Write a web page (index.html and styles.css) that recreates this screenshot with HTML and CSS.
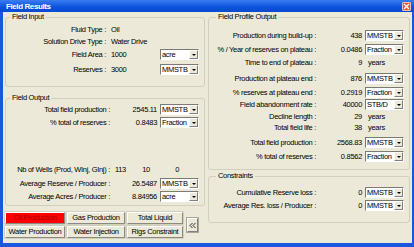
FILE: index.html
```html
<!DOCTYPE html>
<html lang="en">
<head>
    <meta charset="UTF-8">
    <meta name="viewport" content="width=device-width, initial-scale=1.0">
    <title>Field Results</title>
    <link rel="stylesheet" href="styles.css">
</head>
<body>
    <div class="window">
        <div class="titlebar">
            <span class="title">Field Results</span>
            <span class="close">
                <svg width="7" height="7" viewBox="0 0 7 7"><path d="M1 1L6 6M6 1L1 6" stroke="#fff" stroke-width="1.3"/></svg>
            </span>
        </div>

        <div class="client">
            <div class="column left-col">
                <fieldset class="group field-input">
                    <legend>Field Input</legend>
                    <div class="rows">
                        <div class="row"><span class="label">Fluid Type :</span><span class="value">Oil</span></div>
                        <div class="row"><span class="label">Solution Drive Type :</span><span class="value">Water Drive</span></div>
                        <div class="row">
                            <span class="label">Field Area :</span><span class="value">1000</span>
                            <div class="combo"><span class="combo-text">acre</span><span class="combo-btn"></span></div>
                        </div>
                        <div class="row">
                            <span class="label">Reserves :</span><span class="value">3000</span>
                            <div class="combo"><span class="combo-text">MMSTB</span><span class="combo-btn"></span></div>
                        </div>
                    </div>
                </fieldset>

                <fieldset class="group field-output">
                    <legend>Field Output</legend>
                    <div class="rows">
                        <div class="row">
                            <span class="label">Total field production :</span><span class="value">2545.11</span>
                            <div class="combo"><span class="combo-text">MMSTB</span><span class="combo-btn"></span></div>
                        </div>
                        <div class="row">
                            <span class="label">% total of reserves :</span><span class="value">0.8483</span>
                            <div class="combo"><span class="combo-text">Fraction</span><span class="combo-btn"></span></div>
                        </div>
                        <div class="row">
                            <span class="label">Nb of Wells (Prod, WInj, GInj) :</span>
                            <div class="wells"><span>113</span><span>10</span><span>0</span></div>
                        </div>
                        <div class="row">
                            <span class="label">Average Reserve / Producer :</span><span class="value">26.5487</span>
                            <div class="combo"><span class="combo-text">MMSTB</span><span class="combo-btn"></span></div>
                        </div>
                        <div class="row">
                            <span class="label">Average Acres / Producer :</span><span class="value">8.84956</span>
                            <div class="combo"><span class="combo-text">acre</span><span class="combo-btn"></span></div>
                        </div>
                    </div>
                </fieldset>

                <div class="tabs">
                    <div class="tab-grid">
                        <button class="tab active">Oil Production</button>
                        <button class="tab">Gas Production</button>
                        <button class="tab">Total Liquid</button>
                        <button class="tab">Water Production</button>
                        <button class="tab">Water Injection</button>
                        <button class="tab">Rigs Constraint</button>
                    </div>
                    <button class="collapse">
                        <svg width="7" height="7" viewBox="0 0 7 7"><path d="M3.5 1L1 3.5L3.5 6M6.5 1L4 3.5L6.5 6" fill="none" stroke="#000" stroke-width="0.8"/></svg>
                    </button>
                </div>
            </div>

            <div class="column right-col">
                <fieldset class="group profile-output">
                    <legend>Field Profile Output</legend>
                    <div class="rows">
                        <div class="row">
                            <span class="label">Production during build-up :</span><span class="value">438</span>
                            <div class="combo"><span class="combo-text">MMSTB</span><span class="combo-btn"></span></div>
                        </div>
                        <div class="row">
                            <span class="label">% / Year of reserves on plateau :</span><span class="value">0.0486</span>
                            <div class="combo"><span class="combo-text">Fraction</span><span class="combo-btn"></span></div>
                        </div>
                        <div class="row">
                            <span class="label">Time to end of plateau :</span><span class="value">9</span><span class="unit">years</span>
                        </div>
                        <div class="row">
                            <span class="label">Production at plateau end :</span><span class="value">876</span>
                            <div class="combo"><span class="combo-text">MMSTB</span><span class="combo-btn"></span></div>
                        </div>
                        <div class="row">
                            <span class="label">% reserves at plateau end :</span><span class="value">0.2919</span>
                            <div class="combo"><span class="combo-text">Fraction</span><span class="combo-btn"></span></div>
                        </div>
                        <div class="row">
                            <span class="label">Field abandonment rate :</span><span class="value">40000</span>
                            <div class="combo"><span class="combo-text">STB/D</span><span class="combo-btn"></span></div>
                        </div>
                        <div class="row">
                            <span class="label">Decline length :</span><span class="value">29</span><span class="unit">years</span>
                        </div>
                        <div class="row">
                            <span class="label">Total field life :</span><span class="value">38</span><span class="unit">years</span>
                        </div>
                        <div class="row">
                            <span class="label">Total field production :</span><span class="value">2568.83</span>
                            <div class="combo"><span class="combo-text">MMSTB</span><span class="combo-btn"></span></div>
                        </div>
                        <div class="row">
                            <span class="label">% total of reserves :</span><span class="value">0.8562</span>
                            <div class="combo"><span class="combo-text">Fraction</span><span class="combo-btn"></span></div>
                        </div>
                    </div>
                </fieldset>

                <fieldset class="group constraints">
                    <legend>Constraints</legend>
                    <div class="rows">
                        <div class="row">
                            <span class="label">Cumulative Reserve loss :</span><span class="value">0</span>
                            <div class="combo"><span class="combo-text">MMSTB</span><span class="combo-btn"></span></div>
                        </div>
                        <div class="row">
                            <span class="label">Average Res. loss / Producer :</span><span class="value">0</span>
                            <div class="combo"><span class="combo-text">MMSTB</span><span class="combo-btn"></span></div>
                        </div>
                    </div>
                </fieldset>
            </div>
        </div>
    </div>
</body>
</html>
```

FILE: styles.css
```css
* {
    box-sizing: border-box;
}
body {
    margin: 0;
    font-family: "Liberation Sans", Arial, sans-serif;
    font-size: 7.5px;
    letter-spacing: -0.3px;
    color: #000;
    background: #1553dc;
}
.window {
    width: 414px;
    height: 247px;
    display: flex;
    flex-direction: column;
    background: #1a56de;
}
.titlebar {
    height: 12px;
    display: flex;
    align-items: center;
    justify-content: space-between;
    padding: 0 3px 0 6px;
    background: linear-gradient(#3a7cf0, #0b52dc 60%, #0a4ad0);
}
.title {
    color: #fff;
    font-weight: bold;
    font-size: 8px;
    letter-spacing: -0.4px;
}
.close {
    width: 9px;
    height: 9px;
    display: flex;
    align-items: center;
    justify-content: center;
    background: #dc5a34;
    border: 1px solid #f4c0b0;
    border-radius: 1px;
}
.client {
    flex: 1;
    display: flex;
    gap: 3px;
    margin: 0 2px 4px 3px;
    padding: 1px 2px 0 2px;
    background: #ece9d8;
}
.column {
    display: flex;
    flex-direction: column;
}
.left-col {
    width: 200px;
}
.right-col {
    width: 202px;
}
.group {
    margin: 0;
    padding: 0 5px 0 0;
    min-width: 0;
    border: 1px solid #d0d0bf;
    border-radius: 3px;
}
.group legend {
    padding: 0 2px;
    margin-left: 4px;
    line-height: 8px;
}
.right-col .group legend {
    margin-left: 7px;
}
.rows {
    display: grid;
    align-items: end;
}
.row {
    display: contents;
}
.label,
.value,
.unit,
.wells {
    height: 11px;
    line-height: 11px;
    white-space: nowrap;
}
.label {
    grid-column: 1;
    text-align: right;
}
.value {
    grid-column: 2;
}
.combo,
.unit {
    grid-column: 3;
}

/* left column */
.field-input {
    padding: 3px 5px 11px 0;
}
.field-input .rows {
    grid-template-columns: 105px 49px 39px;
    grid-template-rows: 11px 12px 13px 15px;
}
.field-input .label {
    padding-right: 5px;
}
.field-output {
    margin-top: 7px;
    padding: 2px 5px 3px 0;
}
.field-output .rows {
    grid-template-columns: 104px 46px 39px;
    grid-template-rows: 11px 13px 47px 14px 13px;
    column-gap: 2px;
}
.field-output .value {
    text-align: right;
    padding-right: 1px;
}
.wells {
    grid-column: 2 / 4;
    display: flex;
    margin-left: -3px;
}
.wells span:nth-child(1) {
    width: 17px;
    text-align: right;
}
.wells span:nth-child(2) {
    width: 24px;
    text-align: right;
}
.wells span:nth-child(3) {
    width: 29px;
    text-align: right;
}

/* right column */
.profile-output {
    padding: 9px 5px 7px 0;
}
.constraints {
    margin-top: 2px;
    padding: 7px 5px 11px 0;
}
.right-col .rows {
    grid-template-columns: 107px 49px 39px;
}
.right-col .value {
    text-align: right;
    padding-right: 3px;
}
.profile-output .rows {
    grid-template-rows: 11px 14px 13px 16px 14px 12px 12px 11px 15px 14px;
}
.constraints .rows {
    grid-template-rows: 11px 13px;
}
.unit {
    padding-left: 3px;
}

/* dropdowns */
.combo {
    height: 11px;
    display: flex;
    background: #fff;
    border: 1px solid;
    border-color: #7b7b73 #fff #fff #7b7b73;
}
.combo-text {
    flex: 1;
    padding-left: 1px;
    line-height: 9px;
    overflow: hidden;
}
.combo-btn {
    width: 9px;
    display: flex;
    align-items: center;
    justify-content: center;
    background: #ece9d8;
    border: 1px solid;
    border-color: #fff #808080 #808080 #fff;
}
.combo-btn::after {
    content: "";
    border-left: 2px solid transparent;
    border-right: 2px solid transparent;
    border-top: 2px solid #000;
}

/* chart buttons */
.tabs {
    display: flex;
    align-items: center;
    gap: 4px;
    margin-top: 6px;
}
.tab-grid {
    display: grid;
    grid-template-columns: 60px 58px 56px;
    grid-template-rows: 12px 12px;
    gap: 2px;
}
.tab {
    padding: 0;
    font: inherit;
    letter-spacing: inherit;
    line-height: 10px;
    color: #000;
    background: #ece9d8;
    border: 1px solid;
    border-color: #fff #8a8a80 #8a8a80 #fff;
    box-shadow: 0 0 0 0.5px #b8b6a8;
}
.tab.active {
    background: #ff0000;
    color: #a80000;
}
.collapse {
    width: 11px;
    height: 14px;
    padding: 0;
    display: flex;
    align-items: center;
    justify-content: center;
    background: #ece9d8;
    border: 1px solid;
    border-color: #fff #808080 #808080 #fff;
    box-shadow: 0 0 0 1px #a8a698;
}
```
